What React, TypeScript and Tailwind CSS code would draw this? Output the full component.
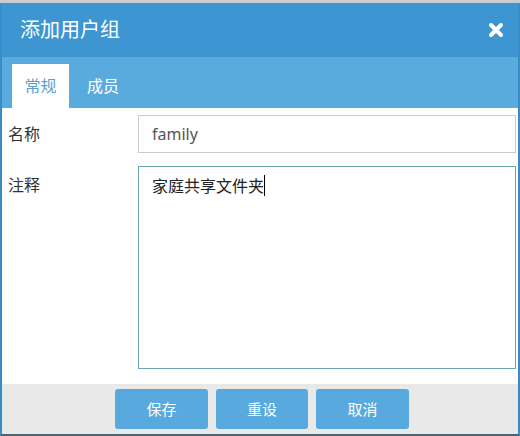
import React from "react";

const font = { fontFamily: '"Noto Sans", "Noto Sans CJK SC", sans-serif' };

export default function App() {
  return (
    <div className="w-[520px] h-[436px] bg-[#c9cdd1] pt-[3px] overflow-hidden" style={font}>
      <div className="h-[433px] flex flex-col border-x-2 border-b-2 border-x-[#3a8cc6] border-b-[#4b6373]">
        <div className="h-[54px] bg-[#3d95d1] flex items-center justify-between pl-[18px] pr-[14px] shrink-0">
          <span className="text-white text-[20px] leading-none">添加用户组</span>
          <svg width="16" height="16" viewBox="0 0 16 16">
            <path d="M3 3 L13 13 M13 3 L3 13" stroke="#ffffff" strokeWidth="4" strokeLinecap="round" />
          </svg>
        </div>
        <div className="h-[51px] bg-[#5aabdd] flex items-end pl-[10px] shrink-0">
          <div className="w-[57px] h-[44px] bg-white flex items-center justify-center text-[16px] text-[#5a9fd2]">常规</div>
          <div className="w-[68px] h-[44px] flex items-center justify-center text-[16px] text-white">成员</div>
        </div>
        <div className="flex-1 bg-white flex flex-col gap-[13px] pt-[7px] pr-[2px]">
          <div className="flex items-center">
            <div className="w-[136px] pl-[6px] text-[16px] text-[#333]">名称</div>
            <div className="flex-1 h-[38px] border border-[#cccccc] flex items-center px-[13px] text-[16px] text-[#555]">family</div>
          </div>
          <div className="flex items-start">
            <div className="w-[136px] pl-[6px] pt-[7px] text-[16px] text-[#333]">注释</div>
            <div className="flex-1 h-[203px] border border-[#69a6b8] px-[13px] pt-[7px] text-[16px] text-[#222] flex items-start">
              <span>家庭共享文件夹</span>
              <span className="inline-block w-[1px] h-[21px] bg-black mt-[1px]" />
            </div>
          </div>
        </div>
        <div className="h-[50px] bg-[#e9e9e9] flex items-center pl-[113px] gap-[8px] shrink-0">
          <button className="w-[93px] h-[40px] rounded-[3px] bg-[#58a9dd] text-white text-[15px]">保存</button>
          <button className="w-[92px] h-[40px] rounded-[3px] bg-[#58a9dd] text-white text-[15px]">重设</button>
          <button className="w-[93px] h-[40px] rounded-[3px] bg-[#58a9dd] text-white text-[15px]">取消</button>
        </div>
      </div>
    </div>
  );
}
